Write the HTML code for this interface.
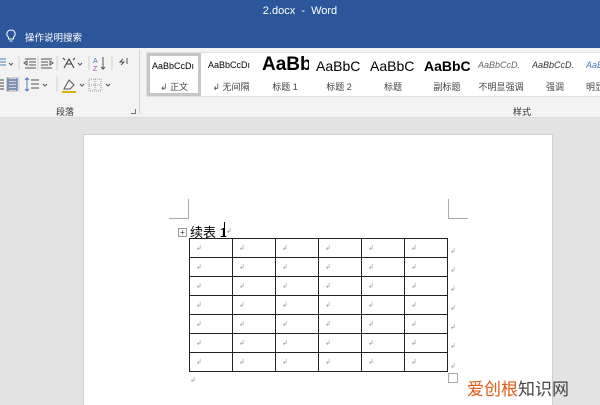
<!DOCTYPE html>
<html><head><meta charset="utf-8"><style>
*{margin:0;padding:0;box-sizing:border-box}
html,body{width:600px;height:405px;overflow:hidden}
body{background:#e3e3e3;font-family:"Liberation Sans","Noto Sans CJK SC",sans-serif;position:relative}
.abs{position:absolute}
.top{left:0;top:0;width:600px;height:48px;background:#2b579a;color:#fff}
.rib{left:0;top:48px;width:600px;height:70px;background:#f3f3f3;border-bottom:1px solid #dcdcdc}
.gal{left:146px;top:52px;width:454px;height:45px;background:#fff;border:1px solid #e0e0e0;border-right:none}
.st{top:0;width:54px;height:43px;text-align:center;overflow:hidden;white-space:nowrap}
.st .p{position:absolute;left:4px;top:7px;width:48px;overflow:hidden;text-align:left;white-space:nowrap;color:#000}
.st .l{position:absolute;left:0;width:54px;top:27px;font-size:9px;color:#444}
.page{left:83px;top:134px;width:470px;height:280px;background:#fff;border:1px solid #d0d0d0}
table{position:absolute;left:189px;top:238px;border-collapse:collapse}
td{width:43px;height:19px;border:1px solid #222;font-size:7px;color:#999;padding-left:6px;vertical-align:middle}
.ret{font-size:7px;color:#999}
</style></head><body>
<div class="abs top">
<div class="abs" style="left:0;width:600px;top:5px;text-align:center;font-size:11px">2.docx &nbsp;-&nbsp; Word</div>
<svg class="abs" style="left:5px;top:29px" width="12" height="14" viewBox="0 0 12 14"><path d="M6 1a4 4 0 0 0-2.5 7.2V10h5V8.2A4 4 0 0 0 6 1zM4.5 12h3" fill="none" stroke="#fff" stroke-width="1"/></svg>
<div class="abs" style="left:25px;top:30px;font-size:9.5px">操作说明搜索</div>
</div>
<div class="abs rib">
<svg class="abs" style="left:0;top:6px" width="140" height="44" viewBox="0 0 140 44" fill="none" stroke="#555" stroke-width="1">
<path d="M0 5h6M0 8h6M0 11h6" stroke="#4a7bc0"/><path d="M9 9l2 2 2-2" />
<path d="M19 2v14M38 2v14M57 2v14M89 2v14M112 2v14" stroke="#d0d0d0"/>
<path d="M25 5h11M29 8h7M29 11h7M25 14h11M24 9l3-2v4z" />
<path d="M41 5h11M41 8h7M41 11h7M41 14h11M53 9l-3-2v4z" />
<path d="M64 14l5-9 5 9M66 10h6M63 4l2 2M75 4l-2 2" stroke="#333"/><path d="M78 9l2 2 2-2"/>
<text x="93" y="9" font-size="7" fill="#4a7bc0" stroke="none">A</text><text x="93" y="17" font-size="7" fill="#a040a0" stroke="none">Z</text><path d="M103 3v12l-2-2M103 15l2-2"/>
<path d="M123 5l-3 3h4l-3 3M127 4v6"/>
<path d="M0 26h4M0 29h4M0 32h4M0 35h4" stroke="#444"/>
<rect x="6" y="23" width="11" height="15" fill="#cfcfcf" stroke="none"/>
<path d="M9 26h7M9 29h7M9 32h7M9 35h7M8 24v13M17 24v13" stroke="#2b579a"/>
<path d="M19 22v16M57 22v16" stroke="#d0d0d0"/>
<path d="M27 24v13M25 26l2-2 2 2M25 35l2 2 2-2" stroke="#4a7bc0"/><path d="M31 26h8M31 30h8M31 34h8"/><path d="M43 30l2 2 2-2"/>
<path d="M64 35l5-9 5 5-4 4z"/><path d="M62 38h14" stroke="#d8b000" stroke-width="2"/><path d="M80 30l2 2 2-2"/>
<path d="M89 25h12v12H89zM95 25v12M89 31h12" stroke="#999" stroke-dasharray="1 1"/><path d="M106 30l2 2 2-2"/>
</svg>
<div class="abs" style="left:56px;top:57px;font-size:9px;color:#333">段落</div>
<div class="abs" style="left:131px;top:61px;width:5px;height:5px;border-right:1px solid #777;border-bottom:1px solid #777"></div>
<div class="abs" style="left:139px;top:2px;width:1px;height:64px;background:#d4d4d4"></div>
<div class="abs" style="left:513px;top:57px;font-size:9px;color:#333">样式</div>
</div>
<div class="abs gal">
<div class="abs st" style="left:0;border:3px solid #c6c6c6;width:54px"><div class="p" style="left:2px;top:5px;font-size:9px;width:46px">AaBbCcDı</div><div class="l" style="top:24px;width:48px">↲ 正文</div></div>
<div class="abs st" style="left:57px"><div class="p" style="font-size:9px">AaBbCcDı</div><div class="l">↲ 无间隔</div></div>
<div class="abs st" style="left:111px"><div class="p" style="font-size:19px;font-weight:bold;top:1px;width:47px">AaBbl</div><div class="l">标题 1</div></div>
<div class="abs st" style="left:165px"><div class="p" style="font-size:14px;top:5px;width:46px">AaBbC</div><div class="l">标题 2</div></div>
<div class="abs st" style="left:219px"><div class="p" style="font-size:14px;top:5px;width:46px">AaBbC</div><div class="l">标题</div></div>
<div class="abs st" style="left:273px"><div class="p" style="font-size:14px;top:5px;font-weight:bold;width:46px">AaBbC</div><div class="l">副标题</div></div>
<div class="abs st" style="left:327px"><div class="p" style="font-size:9px;font-style:italic;color:#666;width:46px">AaBbCcD.</div><div class="l">不明显强调</div></div>
<div class="abs st" style="left:381px"><div class="p" style="font-size:9px;font-style:italic;color:#333;width:46px">AaBbCcD.</div><div class="l">强调</div></div>
<div class="abs st" style="left:435px"><div class="p" style="font-size:9px;font-style:italic;color:#4a7bc0">AaBb</div><div class="l" style="text-align:left;padding-left:4px">明显</div></div>
</div>
<div class="abs page"></div>
<div class="abs" style="left:169px;top:199px;width:20px;height:20px;border-right:1px solid #aaa;border-bottom:1px solid #aaa"></div>
<div class="abs" style="left:448px;top:199px;width:20px;height:20px;border-left:1px solid #aaa;border-bottom:1px solid #aaa"></div>
<div class="abs" style="left:178px;top:228px;width:9px;height:9px;border:1px solid #999;font-size:8px;line-height:7px;text-align:center;color:#333">+</div>
<div class="abs" style="left:190px;top:222px;font-size:13px;color:#000">续表 1</div>
<div class="abs" style="left:224px;top:222px;width:1px;height:15px;background:#000"></div>
<div class="abs ret" style="left:226px;top:227px">↲</div>
<table>
<tr><td>↲</td><td>↲</td><td>↲</td><td>↲</td><td>↲</td><td>↲</td></tr>
<tr><td>↲</td><td>↲</td><td>↲</td><td>↲</td><td>↲</td><td>↲</td></tr>
<tr><td>↲</td><td>↲</td><td>↲</td><td>↲</td><td>↲</td><td>↲</td></tr>
<tr><td>↲</td><td>↲</td><td>↲</td><td>↲</td><td>↲</td><td>↲</td></tr>
<tr><td>↲</td><td>↲</td><td>↲</td><td>↲</td><td>↲</td><td>↲</td></tr>
<tr><td>↲</td><td>↲</td><td>↲</td><td>↲</td><td>↲</td><td>↲</td></tr>
<tr><td>↲</td><td>↲</td><td>↲</td><td>↲</td><td>↲</td><td>↲</td></tr>
</table>
<div class="abs ret" style="left:450px;top:242px;line-height:19.1px">↲<br>↲<br>↲<br>↲<br>↲<br>↲<br>↲</div>
<div class="abs" style="left:448px;top:373px;width:10px;height:10px;border:1px solid #aaa"></div>
<div class="abs ret" style="left:190px;top:376px">↲</div>
<div class="abs" style="left:467px;top:375px;font-size:17px;color:#e05a1a;white-space:nowrap">爱创根<span style="color:#444">知识网</span></div>
</body></html>
